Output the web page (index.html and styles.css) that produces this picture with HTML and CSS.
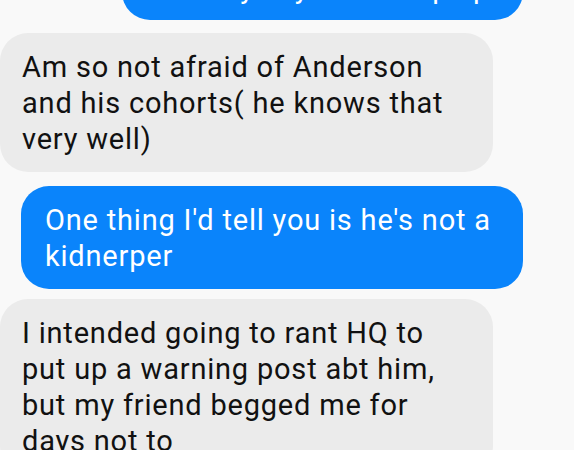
FILE: index.html
```html
<!DOCTYPE html>
<html>
<head>
<meta charset="utf-8">
<link rel="stylesheet" href="styles.css">
</head>
<body>
<div class="thread">
  <div class="bubble out first"><p class="clipped">but they say he kidnaps people then</p></div>
  <div class="bubble in">Am so not afraid of Anderson and his cohorts( he knows that very well)</div>
  <div class="bubble out wide">One thing I'd tell you is he's not a kidnerper</div>
  <div class="bubble in">I intended going to rant HQ to put up a warning post abt him, but my friend begged me for days not to</div>
</div>
</body>
</html>
```
FILE: styles.css
```css
html, body {
  margin: 0;
  padding: 0;
  background: #f9f9f9;
  overflow: hidden;
  height: 450px;
}
.thread {
  display: flex;
  flex-direction: column;
  font-family: Roboto, "Noto Sans", sans-serif;
  font-size: 29px;
  letter-spacing: 0.8px;
  line-height: 36px;
}
.bubble {
  box-sizing: border-box;
  border-radius: 28px;
  padding: 16px 33px 15px 22px;
}
.in {
  align-self: flex-start;
  width: 493px;
  background: #ebebeb;
  color: #111;
}
.out {
  align-self: flex-end;
  margin-right: 51px;
  background: #0a84fb;
  color: #fff;
}
.first {
  width: 401px;
  height: 60px;
  margin-top: -40px;
  margin-bottom: 13px;
  padding: 0 20px 0 23px;
  overflow: hidden;
  position: relative;
}
.clipped {
  margin: 0;
  white-space: nowrap;
  padding-top: 10px;
}
.in + .wide { margin-top: 14px; }
.wide {
  width: 502px;
  padding-left: 24px;
  padding-right: 4px;
  margin-bottom: 10px;
}
```
